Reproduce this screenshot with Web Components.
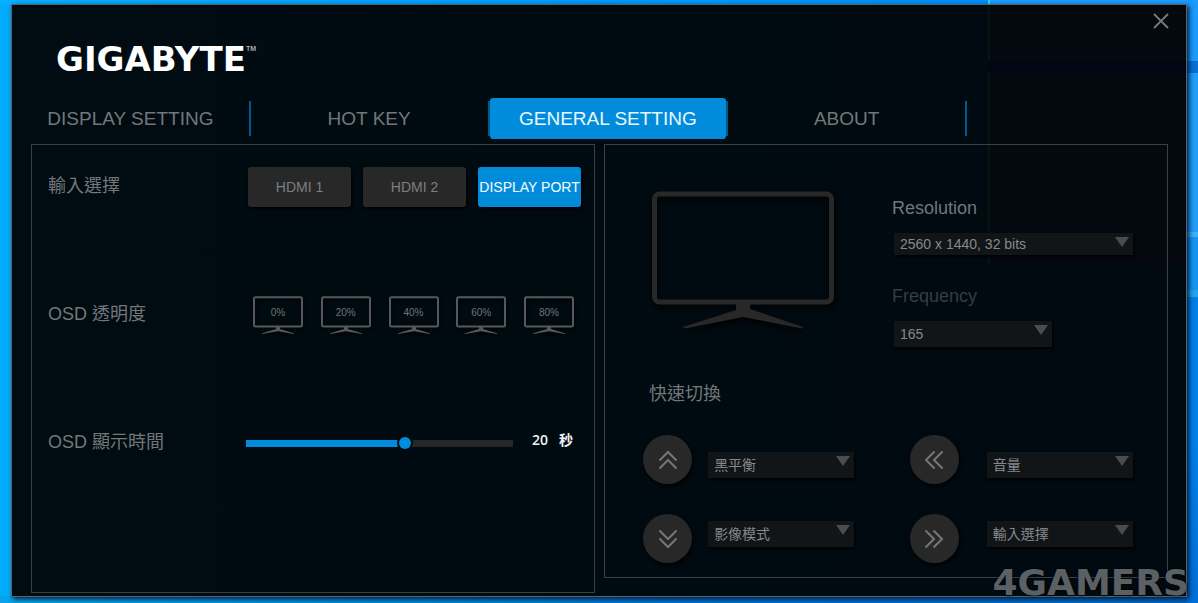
<!DOCTYPE html>
<html lang="zh-Hant">
<head>
<meta charset="utf-8">
<meta name="viewport" content="width=device-width, initial-scale=1">
<title>GIGABYTE OSD Sidekick</title>
<style>
  body { margin: 0; font-family: "Liberation Sans", "Noto Sans CJK TC", sans-serif; color: #73777a; background: #0090f0; }
</style>
</head>
<body>
<desk-top>
  <app-window>
    <app-header slot="header"></app-header>
    <tab-bar slot="tabs">
      <tab-item>DISPLAY SETTING</tab-item>
      <tab-item>HOT KEY</tab-item>
      <tab-item active>GENERAL SETTING</tab-item>
      <tab-item>ABOUT</tab-item>
    </tab-bar>
    <osd-panel></osd-panel>
    <monitor-panel></monitor-panel>
  </app-window>
  <water-mark slot="mark">4GAMERS</water-mark>
</desk-top>

<script>
const define = (name, html, setup) => {
  const template = document.createElement('template');
  template.innerHTML = '<style>*{box-sizing:border-box}button,select{font:inherit;color:inherit}</style>' + html;
  customElements.define(name, class extends HTMLElement {
    constructor() {
      super();
      this.attachShadow({ mode: 'open' }).append(template.content.cloneNode(true));
    }
    connectedCallback() { if (setup) setup(this, this.shadowRoot); }
  });
};

define('desk-top', `
<style>
  :host {
    display: flex; position: relative; min-height: 100vh; box-sizing: border-box; padding: 4px 11px 6px;
    background:
      linear-gradient(#1a9bfe 0 61px, #0670d6 61px 73px, #1e9dfb 73px 232px, #3cb2f8 232px 237px, #1295f4 237px 290px, #22a4f4 290px 297px, #0080ea 297px 450px, #006fd8) right / 11px 100% no-repeat,
      linear-gradient(90deg, #08aeff, #008ffa 988px, #2fd8ff 988px 990px, #1e9cfe 990px) top / 100% 5px no-repeat,
      linear-gradient(90deg, #08a4e8, #0070cc 60%, #0068c4) bottom / 100% 7px no-repeat,
      #00adfb;
  }
  ::slotted(app-window) { flex: 1; min-width: 0; }
</style>
<slot></slot><slot name="mark"></slot>`);

define('app-window', `
<style>
  :host {
    display: flex; flex-direction: column; box-sizing: border-box; border: 1px solid #59646a;
    box-shadow: 2px 2px 5px #001a38;
    background:
      linear-gradient(#020612, #020612) right 56px / 198px 12px no-repeat,
      linear-gradient(90deg, transparent 976px, #04170f 976px 978px, #03090f 978px) top / 100% 260px no-repeat,
      linear-gradient(90deg, #000c12, #000a10);
  }
  main { flex: 1; display: grid; grid-template-columns: 1fr 1fr; gap: 9px; padding: 5px 18px 3px 19px; align-items: start; }
</style>
<slot name="header"></slot>
<slot name="tabs"></slot>
<main><slot></slot></main>`);

define('app-header', `
<style>
  :host { display: flex; justify-content: space-between; align-items: flex-start; height: 93px; }
  h1 { display: flex; align-items: flex-start; margin: 0; padding: 30px 0 0 44px; font: 700 34px/48px "DejaVu Sans", sans-serif; color: #fff; }
  small { font: 700 7px/8px "Liberation Sans", sans-serif; padding-top: 10px; color: #a9adb0; }
  button { margin: 5px 14px 0 0; padding: 3px; border: 0; background: none; width: 22px; height: 22px; }
  svg { display: block; }
</style>
<h1>GIGABYTE<small>TM</small></h1>
<button aria-label="Close"><svg width="16" height="16" viewBox="0 0 16 16" fill="none" stroke="#777b7d" stroke-width="1.8"><path d="M1 1 15 15M15 1 1 15"/></svg></button>`);

define('tab-bar', `
<style>
  :host { display: block; padding-right: 219px; }
  nav { display: grid; grid-template-columns: repeat(4, 1fr); }
</style>
<nav><slot></slot></nav>`);

define('tab-item', `
<style>
  :host {
    display: block; height: 41px; padding-right: 2px;
    background: linear-gradient(#00588c, #00588c) right center / 2px 35px no-repeat;
  }
  a { display: flex; align-items: center; justify-content: center; height: 100%; font-size: 19px; line-height: 24px; color: #73777a; text-decoration: none; white-space: nowrap; border-radius: 3px; }
  :host([active]) a { background: #018cdb; color: #e9f8ff; }
</style>
<a href="#"><slot></slot></a>`);

define('input-button', `
<style>
  :host { display: block; }
  button {
    display: flex; align-items: center; justify-content: center; width: 100%; height: 40px; padding: 0;
    border: 0; border-radius: 3px; background: #282828; color: #7c7f81; font-size: 14px; white-space: nowrap;
    box-shadow: 1px 2px 4px #000;
  }
  :host([active]) button { background: #018cdb; color: #f6fcff; }
</style>
<button><slot></slot></button>`);

define('opacity-button', `
<style>
  :host { display: block; }
  button { display: grid; justify-items: center; padding: 0; border: 0; background: none; }
  svg, span { grid-area: 1 / 1; }
  svg { display: block; filter: drop-shadow(1px 2px 2px #000); }
  span { font-size: 10px; line-height: 36px; color: #707375; }
</style>
<button>
  <svg width="50" height="40" viewBox="0 0 50 40" fill="none">
    <rect x="1" y="2.2" width="48" height="29.4" rx="1.5" stroke="#56595b" stroke-width="2"/>
    <path d="M23 32h4v2l14 4.2v.8L25 36.2 9 39v-.8L23 34z" fill="#56595b"/>
  </svg>
  <span><slot></slot></span>
</button>`);

define('osd-panel', `
<style>
  :host {
    display: grid; grid-template-columns: 200px minmax(0, 1fr); grid-auto-rows: 40px; row-gap: 88px; align-items: center;
    box-sizing: border-box; height: 449px; border: 1px solid #3b4044; padding: 22px 13px 0 16px; overflow: hidden;
  }
  .label { font-size: 18px; line-height: 24px; padding-bottom: 3px; }
  .inputs { display: grid; grid-template-columns: repeat(3, 1fr); gap: 12px; }
  .levels { display: flex; justify-content: space-between; padding: 0 7px 0 5px; }
  .time { display: grid; grid-template-columns: 1fr 68px; align-items: center; margin-left: -2px; }
  input {
    -webkit-appearance: none; appearance: none; width: 100%; height: 12px; margin: 0;
    background: linear-gradient(90deg, #018cdb 60%, #262626 60%) center / 100% 7px no-repeat;
  }
  input::-webkit-slider-thumb {
    -webkit-appearance: none; width: 12px; height: 12px; border-radius: 50%; background: #018cdb; box-shadow: 0 0 0 2px #000b11;
  }
  output { display: flex; gap: 11px; padding: 0 0 6px 19px; font: 600 14px/20px "Open Sans", "Noto Sans CJK TC", sans-serif; color: #f1f4f5; white-space: nowrap; }
</style>
<span class="label">輸入選擇</span>
<div class="inputs">
  <input-button>HDMI 1</input-button>
  <input-button>HDMI 2</input-button>
  <input-button active>DISPLAY PORT</input-button>
</div>
<span class="label">OSD 透明度</span>
<div class="levels">
  <opacity-button>0%</opacity-button>
  <opacity-button>20%</opacity-button>
  <opacity-button>40%</opacity-button>
  <opacity-button>60%</opacity-button>
  <opacity-button>80%</opacity-button>
</div>
<label class="label" for="seconds">OSD 顯示時間</label>
<div class="time">
  <input id="seconds" type="range" min="5" max="30" value="20">
  <output for="seconds"><span>20</span><span>秒</span></output>
</div>`);

define('drop-down', `
<style>
  :host { display: block; }
  .field { display: grid; height: var(--height, 26px); box-shadow: 1px 2px 3px #000; }
  select, svg { grid-area: 1 / 1; }
  label { display: block; font-size: 18px; line-height: 24px; }
  label[hidden] { display: none; }
  :host([dim]) label { color: #393c40; }
  :host([caption]) .field { margin: 13px 0 0 2px; }
  select {
    -webkit-appearance: none; appearance: none; width: 100%; height: 100%; padding: 0 22px 0 6px; border: 0; border-radius: 0;
    background: #121518; color: #85898b; font-size: 14px; line-height: 20px;
  }
  svg { justify-self: end; margin: 4px 4px 0 0; pointer-events: none; }
</style>
<label for="choice" hidden></label>
<div class="field">
  <select id="choice"><option></option></select>
  <svg width="14" height="10" viewBox="0 0 14 10"><path d="M0 0h14L7 10z" fill="#4a4d50"/></svg>
</div>`, (host, root) => {
  root.querySelector('option').textContent = host.getAttribute('value');
  if (host.hasAttribute('caption')) {
    const label = root.querySelector('label');
    label.hidden = false;
    label.textContent = host.getAttribute('caption');
  } else {
    root.querySelector('select').setAttribute('aria-label', host.getAttribute('name'));
  }
});

define('arrow-button', `
<style>
  :host { display: block; }
  button { display: grid; place-items: center; width: 49px; height: 49px; padding: 0; border: 0; border-radius: 50%; background: #282828; box-shadow: 1px 2px 4px #000; }
  :host([direction=right]) svg { rotate: 90deg; }
  :host([direction=down]) svg { rotate: 180deg; }
  :host([direction=left]) svg { rotate: 270deg; }
</style>
<button><svg width="20" height="20" viewBox="0 0 20 20" fill="none" stroke="#73777a" stroke-width="2"><path d="M1.500 10.500 10 2l8.500 8.500M1.500 18.500 10 10l8.500 8.500"/></svg></button>`,
(host, root) => root.querySelector('button').setAttribute('aria-label', host.getAttribute('direction')));

define('monitor-panel', `
<style>
  :host { display: block; box-sizing: border-box; height: 434px; border: 1px solid #3b4044; padding: 46px 34px 0 38px; }
  .screen { display: grid; grid-template-columns: 249px minmax(0, 1fr); height: 190px; }
  .monitor { display: block; margin-left: 9px; filter: drop-shadow(1px 3px 3px #000); }
  .fields { display: grid; align-content: start; gap: 29px; padding-top: 5px; }
  .wide { --height: 22px; }
  .rate { width: 160px; }
  h2 { margin: 0 0 29px 6px; padding-top: 1px; font-size: 18px; font-weight: 400; line-height: 24px; }
  .quick { display: grid; grid-template-columns: 65fr 201fr 77fr 146fr; }
  .arrows { display: grid; gap: 30px; align-content: start; }
  .choices { display: grid; gap: 43px; padding-top: 17px; align-content: start; max-width: 146px; }
</style>
<div class="screen">
  <svg class="monitor" width="182" height="138" viewBox="0 0 182 138" aria-hidden="true">
    <rect x="2.500" y="3" width="177" height="108" rx="5" fill="none" stroke="#282828" stroke-width="5"/>
    <path d="M84 113h14v5l53 18-1 1.500L91 126l-58 11.500-2-1.500 53-17z" fill="#282828"/>
  </svg>
  <div class="fields">
    <drop-down class="wide" caption="Resolution" value="2560 x 1440, 32 bits"></drop-down>
    <drop-down class="rate" dim caption="Frequency" value="165"></drop-down>
  </div>
</div>
<h2>快速切換</h2>
<div class="quick">
  <div class="arrows"><arrow-button direction="up"></arrow-button><arrow-button direction="down"></arrow-button></div>
  <div class="choices"><drop-down name="up" value="黑平衡"></drop-down><drop-down name="down" value="影像模式"></drop-down></div>
  <div class="arrows"><arrow-button direction="left"></arrow-button><arrow-button direction="right"></arrow-button></div>
  <div class="choices"><drop-down name="left" value="音量"></drop-down><drop-down name="right" value="輸入選擇"></drop-down></div>
</div>`);

define('water-mark', `
<style>
  :host {
    position: absolute; right: 9px; bottom: 2px; font: 700 36px/36px "DejaVu Sans", sans-serif;
    color: #5b6065; text-shadow: 0 0 3px #000; pointer-events: none;
  }
</style>
<slot></slot>`);
</script>
</body>
</html>
